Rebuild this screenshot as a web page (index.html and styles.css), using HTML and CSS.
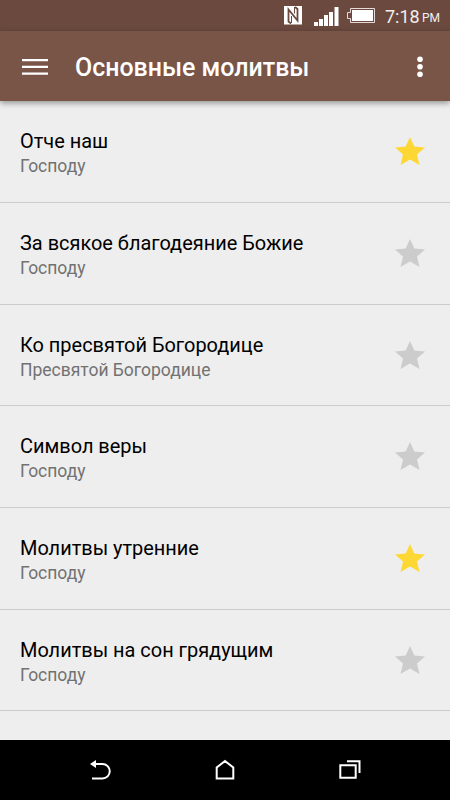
FILE: index.html
```html
<!DOCTYPE html>
<html lang="ru">
<head>
<meta charset="utf-8">
<title>Основные молитвы</title>
<link rel="stylesheet" href="styles.css">
</head>
<body>
<div class="screen">
  <div class="status">
    <svg class="nfc" width="18" height="19" viewBox="0 0 18 19"><path fill="#fff" d="M0 0h18v18.500H0z"/><path fill="none" stroke="#6b493f" stroke-width="1.800" d="M7 17.500L4.500 15.500V3.500L13.500 14.500V3L11 1"/><path fill="none" stroke="#6b493f" stroke-width="1" d="M7.500 10v7M10.500 1v6.500"/></svg>
    <svg class="signal" width="25" height="20" viewBox="0 0 25 20"><path fill="#fff" d="M0 15h4v4H0zM5 12h4v7H5zM10 8h4v11h-4zM15 5h4v14h-4zM20.500 0h4v19h-4z"/></svg>
    <svg class="battery" width="30" height="16" viewBox="0 0 30 16"><path fill="none" stroke="#e5dcd9" d="M4.500.5h24v14h-24v-4h-3v-6h3z"/><path fill="#fff" d="M6 2h21v11H6z"/></svg>
    <span class="time">7:18</span><span class="pm">PM</span>
  </div>
  <header class="bar">
    <svg class="menu" width="26" height="16" viewBox="0 0 26 16"><path fill="#fff" d="M0 0h26v2.300H0zM0 6.700h26V9H0zM0 13.400h26v2.300H0z"/></svg>
    <h1>Основные молитвы</h1>
    <svg class="more" width="6" height="22" viewBox="0 0 6 22"><g fill="#fff"><circle cx="3" cy="3.300" r="2.800"/><circle cx="3" cy="10.800" r="2.800"/><circle cx="3" cy="18.300" r="2.800"/></g></svg>
  </header>
  <ul class="list">
    <li><div><p class="name">Отче наш</p><p class="to">Господу</p></div><svg class="star on" viewBox="0 0 32 30"><path d="M16 1l4.300 9.600 10.700 1-8 7 2.500 10.400L16 23.600 6.500 29 9 18.600l-8-7 10.700-1z"/></svg></li>
    <li><div><p class="name">За всякое благодеяние Божие</p><p class="to">Господу</p></div><svg class="star" viewBox="0 0 32 30"><path d="M16 1l4.300 9.600 10.700 1-8 7 2.500 10.400L16 23.600 6.500 29 9 18.600l-8-7 10.700-1z"/></svg></li>
    <li><div><p class="name">Ко пресвятой Богородице</p><p class="to">Пресвятой Богородице</p></div><svg class="star" viewBox="0 0 32 30"><path d="M16 1l4.300 9.600 10.700 1-8 7 2.500 10.400L16 23.600 6.500 29 9 18.600l-8-7 10.700-1z"/></svg></li>
    <li><div><p class="name">Символ веры</p><p class="to">Господу</p></div><svg class="star" viewBox="0 0 32 30"><path d="M16 1l4.300 9.600 10.700 1-8 7 2.500 10.400L16 23.600 6.500 29 9 18.600l-8-7 10.700-1z"/></svg></li>
    <li><div><p class="name">Молитвы утренние</p><p class="to">Господу</p></div><svg class="star on" viewBox="0 0 32 30"><path d="M16 1l4.300 9.600 10.700 1-8 7 2.500 10.400L16 23.600 6.500 29 9 18.600l-8-7 10.700-1z"/></svg></li>
    <li><div><p class="name">Молитвы на сон грядущим</p><p class="to">Господу</p></div><svg class="star" viewBox="0 0 32 30"><path d="M16 1l4.300 9.600 10.700 1-8 7 2.500 10.400L16 23.600 6.500 29 9 18.600l-8-7 10.700-1z"/></svg></li>
  </ul>
  <nav class="nav">
    <svg width="24" height="24" viewBox="0 0 24 24"><path fill="#fff" d="M2 6l6-4v8z"/><path fill="none" stroke="#fff" stroke-width="2" d="M7 6h7.500a7.200 7.200 0 0 1 0 14.500H4"/></svg>
    <svg width="24" height="24" viewBox="0 0 24 24"><path fill="none" stroke="#fff" stroke-width="2" d="M3.700 20.500V9.500L12 3l8.300 6.500v11z"/></svg>
    <svg width="24" height="24" viewBox="0 0 24 24"><path fill="none" stroke="#fff" stroke-width="2" d="M2.300 7.300h15.400v12.400H2.300zM9 3.300h12.500V15"/></svg>
  </nav>
</div>
</body>
</html>
```
FILE: styles.css
```css
* { box-sizing: border-box; }
body, h1, p, ul { margin: 0; padding: 0; }
body { font-family: Roboto, "Noto Sans", sans-serif; background: #eee; }
.screen { width: 450px; height: 800px; display: flex; flex-direction: column; overflow: hidden; background: #eee; }
.status { height: 31px; flex: none; background: #6b493f; display: flex; align-items: flex-start; justify-content: flex-end; padding-right: 10px; color: #f3eeec; }
.nfc { margin: 6px 12px 0 0; }
.signal { margin: 7px 7px 0 0; }
.battery { margin: 8px 9px 0 0; }
.time { font-size: 18px; line-height: 20px; margin: 7px 4px 0 0; width: 34px; white-space: nowrap; }
.pm { font-size: 12px; line-height: 20px; margin-top: 8px; margin-left: -1px; width: 18px; }
.bar { height: 70px; flex: none; background: #795548; display: flex; align-items: center; padding: 1px 27px 0 22px; box-shadow: 0 2px 6px rgba(0,0,0,.4); position: relative; }
.bar h1 { flex: 1; margin-left: 27px; padding-top: 3px; color: #fff; font-size: 24.950px; font-weight: 500; line-height: 32px; white-space: nowrap; }
.list { flex: 1; min-height: 0; list-style: none; padding-top: .3px; }
.list li { height: 101.67px; border-bottom: 1px solid #ccc; display: flex; align-items: center; justify-content: space-between; padding: 2px 24px 0 20px; }
.name { font-size: 19.950px; line-height: 26px; color: #000; padding-top: 1.400px; white-space: nowrap; }
.to { font-size: 17.500px; line-height: 24px; color: #727272; white-space: nowrap; }
.star { width: 32px; height: 30px; margin-bottom: 2.500px; fill: #ccc; }
.star.on { fill: #fdd835; }
.nav { height: 60px; flex: none; background: #000; display: flex; justify-content: space-between; align-items: center; padding: 0 88px; }
```
